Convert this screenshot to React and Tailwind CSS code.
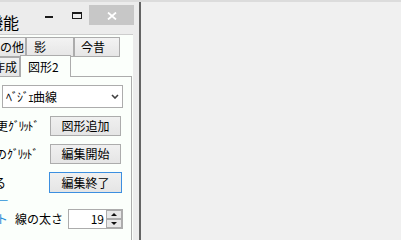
export default function App() {
  const tabBg = "bg-linear-to-b from-[#f3f3f3] to-[#e6e6e6]";
  const btn =
    "border border-[#acacac] bg-linear-to-b from-[#f0f0f0] to-[#e5e5e5] flex items-center justify-center";
  const root =
    'w-[401px] h-[240px] overflow-hidden bg-[#f0f0f0] flex flex-col font-["Noto_Sans_CJK_JP",sans-serif] text-[12px] leading-none text-black';
  return (
    <div className={root}>
      <div className="h-[2px] shrink-0 bg-[#dcdcdc]" />
      <div className="flex flex-1 min-h-0">
        <div className="w-[141px] shrink-0 flex flex-col bg-[#ececec] border-r-2 border-[#646464] overflow-hidden">
          {/* title bar */}
          <div className="h-[32px] shrink-0 flex items-start pt-[3px] pr-[5px]">
            <div className="flex-1 flex justify-start">
              <span className="-ml-[13px] mt-[9px] text-[16px] whitespace-nowrap">機能</span>
            </div>
            <div className="w-[26px] h-[20px] flex justify-center pt-[11px]">
              <div className="w-[8px] h-[2px] bg-[#1a1a1a]" />
            </div>
            <div className="w-[27px] h-[20px] flex justify-start pl-[10px] pt-[7px]">
              <div className="w-[10px] h-[7px] border border-t-2 border-[#1a1a1a]" />
            </div>
            <div className="w-[45px] h-[20px] bg-[#c7c7c7] flex justify-start pl-[18px] pt-[7px]">
              <svg width="10" height="8" viewBox="0 0 10 8">
                <path d="M1 0.5 L9 7.5 M9 0.5 L1 7.5" stroke="#ffffff" strokeWidth="1.8" fill="none" />
              </svg>
            </div>
          </div>
          {/* client area */}
          <div className="w-[133px] flex-1 flex flex-col bg-[#fbfffb] border-t border-[#cdcdcd] pt-[2px]">
            {/* tab row 1 */}
            <div className="flex h-[20px] shrink-0">
              <div className={`w-[26px] flex items-center justify-end pr-[1px] border-y border-r border-[#acacac] whitespace-nowrap ${tabBg}`}>
                <span>その他</span>
              </div>
              <div className={`w-[48px] flex items-center pl-[7px] border border-[#acacac] ${tabBg}`}>影</div>
              <div className={`w-[46px] flex items-center pl-[6px] border border-[#acacac] ${tabBg}`}>今昔</div>
            </div>
            {/* tab row 2 */}
            <div className="flex items-end h-[19px] shrink-0">
              <div className={`w-[20px] h-[19px] flex items-center justify-end pr-[2px] border-t border-r border-[#acacac] whitespace-nowrap ${tabBg}`}>
                <span>図形作成</span>
              </div>
              <div className="w-[51px] h-[22px] -mb-[1px] relative z-10 flex items-center pl-[7px] border-t border-x border-[#acacac] bg-[#fbfffb]">
                図形2
              </div>
            </div>
            {/* tab page */}
            <div className="w-[132px] flex-1 flex flex-col border-t border-r border-[#acacac] bg-[#fbfffb]">
              <div className="mt-[8px] ml-[2px] w-[121px] h-[23px] shrink-0 border border-[#acacac] bg-white flex items-center pl-[3px] pr-[3px]">
                <span className="flex-1 whitespace-nowrap">
                  <span className="tracking-[-1px]">ﾍﾞｼﾞｪ</span>曲線
                </span>
                <svg width="8" height="5" viewBox="0 0 8 5">
                  <path d="M1 1 L4 4 L7 1" stroke="#404040" strokeWidth="1.6" fill="none" />
                </svg>
              </div>
              <div className="mt-[8px] flex items-center h-[20px] shrink-0">
                <div className="w-[50px] flex justify-end pr-[12px] whitespace-nowrap">
                  <span>
                    表示変更<span className="tracking-[-1.5px]">ｸﾞﾘｯﾄﾞ</span>
                  </span>
                </div>
                <div className={`w-[71px] h-[20px] ${btn}`}>図形追加</div>
              </div>
              <div className="mt-[8px] flex items-center h-[20px] shrink-0">
                <div className="w-[50px] flex justify-end pr-[13px] whitespace-nowrap">
                  <span>
                    背景の<span className="tracking-[-1.5px]">ｸﾞﾘｯﾄﾞ</span>
                  </span>
                </div>
                <div className={`w-[71px] h-[20px] ${btn}`}>編集開始</div>
              </div>
              <div className="mt-[8px] flex items-center h-[21px] shrink-0">
                <div className="w-[49px] flex justify-end pr-[43px] whitespace-nowrap">
                  <span>表示する</span>
                </div>
                <div className="w-[73px] h-[21px] border border-[#3c8fe0] bg-linear-to-b from-[#f0f0f0] to-[#e5e5e5] flex items-center justify-center">
                  編集終了
                </div>
              </div>
              <div className="h-[16px] shrink-0 flex items-center">
                <span className="-ml-[2px] text-[#2a8fd8] text-[10px] leading-none">一</span>
              </div>
              <div className="flex items-center h-[20px] shrink-0">
                <div className="w-[20px] flex justify-start whitespace-nowrap text-[#2a8fd8]">
                  <span className="-ml-[4px]">ト</span>
                </div>
                <div className="w-[48px] flex justify-end pr-[5px] whitespace-nowrap">
                  <span>線の太さ</span>
                </div>
                <div className="w-[55px] h-[20px] border border-[#acacac] bg-white flex items-stretch">
                  <div className="flex-1 flex items-center justify-end pr-[2px]">19</div>
                  <div className="w-[16px] flex flex-col">
                    <div className="h-[9px] border border-[#acacac] bg-[#e8e8e8] flex items-center justify-center">
                      <svg width="6" height="3" viewBox="0 0 6 3">
                        <path d="M0 3 L3 0 L6 3 Z" fill="#111" />
                      </svg>
                    </div>
                    <div className="h-[9px] border border-[#acacac] bg-[#e8e8e8] flex items-center justify-center">
                      <svg width="6" height="3" viewBox="0 0 6 3">
                        <path d="M0 0 L6 0 L3 3 Z" fill="#111" />
                      </svg>
                    </div>
                  </div>
                </div>
              </div>
            </div>
          </div>
        </div>
      </div>
    </div>
  );
}
